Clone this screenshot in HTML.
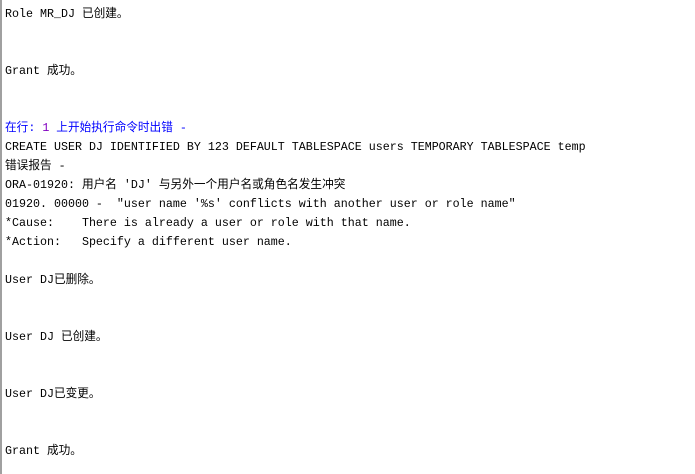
<!DOCTYPE html>
<html><head><meta charset="utf-8"><style>
html,body{margin:0;padding:0;background:#fff;width:695px;height:474px;overflow:hidden}
.bar{position:absolute;left:0;top:0;width:2px;height:474px;background:#a0a0a0}
pre{margin:0;position:absolute;left:5px;top:5px;font-family:"Liberation Mono","Noto Sans CJK SC",monospace;font-size:11.66px;line-height:19px;color:#000}
.b{color:#0000ff}.p{color:#8000c0}
</style></head><body><div class="bar"></div><pre>Role MR_DJ 已创建。


Grant 成功。


<span class="b">在行: <span class="p">1</span> 上开始执行命令时出错 -</span>
CREATE USER DJ IDENTIFIED BY 123 DEFAULT TABLESPACE users TEMPORARY TABLESPACE temp
错误报告 -
ORA-01920: 用户名 'DJ' 与另外一个用户名或角色名发生冲突
01920. 00000 -  "user name '%s' conflicts with another user or role name"
*Cause:    There is already a user or role with that name.
*Action:   Specify a different user name.

User DJ已删除。


User DJ 已创建。


User DJ已变更。


Grant 成功。</pre></body></html>
